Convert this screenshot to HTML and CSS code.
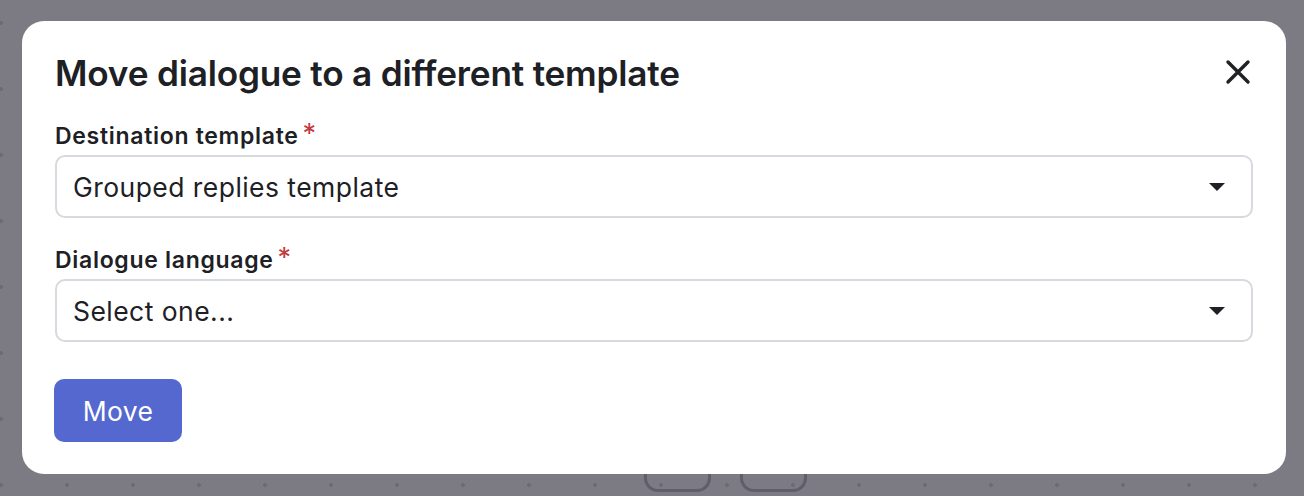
FILE: index.html
```html
<!DOCTYPE html>
<html lang="en">
<head>
<meta charset="utf-8">
<title>Move dialogue</title>
<link rel="stylesheet" href="styles.css">
</head>
<body>
<div class="page">
  <div class="page-actions">
    <span class="ghost-btn"></span>
    <span class="ghost-btn"></span>
  </div>
</div>
<div class="overlay">
  <div class="modal" role="dialog" aria-labelledby="modal-title">
    <div class="modal-header">
      <h1 id="modal-title" class="modal-title">Move dialogue to a different template</h1>
      <button class="close-btn" aria-label="Close">
        <svg width="26" height="26" viewBox="0 0 26 26"><path d="M3 3 L23 23 M23 3 L3 23" stroke="#1f2124" stroke-width="3.4" stroke-linecap="round" fill="none"/></svg>
      </button>
    </div>
    <div class="field">
      <label class="field-label">Destination template<span class="req">*</span></label>
      <div class="select">
        <span class="select-value">Grouped replies template</span>
        <span class="caret"></span>
      </div>
    </div>
    <div class="field">
      <label class="field-label">Dialogue language<span class="req">*</span></label>
      <div class="select">
        <span class="select-value">Select one...</span>
        <span class="caret"></span>
      </div>
    </div>
    <button class="primary-btn">Move</button>
  </div>
</div>
</body>
</html>
```

FILE: styles.css
```css
html, body {
  margin: 0;
  padding: 0;
  height: 100%;
}
body {
  font-family: Inter, "Noto Sans", "Liberation Sans", sans-serif;
  background-color: #7c7b83;
  background-image: radial-gradient(circle at 2px 2px, #6c6b74 1.6px, transparent 2.2px);
  background-size: 66px 66px;
  background-position: -1px 21px;
  overflow: hidden;
  position: relative;
  width: 1304px;
  height: 496px;
}
.page {
  height: 496px;
  display: flex;
  flex-direction: column;
  justify-content: flex-end;
}
.page-actions {
  display: flex;
  gap: 29px;
  padding-left: 644px;
  margin-bottom: 4px;
}
.ghost-btn {
  display: block;
  width: 61px;
  height: 40px;
  border: 3px solid #5f5e6a;
  border-radius: 14px;
}
.overlay {
  position: absolute;
  inset: 0;
}
.modal {
  position: absolute;
  left: 22px;
  top: 21px;
  width: 1264px;
  height: 453px;
  box-sizing: border-box;
  background: #ffffff;
  border-radius: 22px;
  padding: 0 33px;
  color: #1d2024;
}
.modal-header {
  display: flex;
  align-items: center;
  justify-content: space-between;
  height: 102px;
}
.modal-title {
  margin: 0;
  font-size: 35.2px;
  font-weight: 600;
  letter-spacing: -0.2px;
  line-height: 40px;
  padding-top: 2px;
}
.close-btn {
  border: 0;
  background: none;
  padding: 0;
  margin-right: 2px;
  width: 26px;
  height: 26px;
  display: flex;
}
.field {
  display: flex;
  flex-direction: column;
  margin-bottom: 29px;
}
.field-label {
  font-size: 23px;
  font-weight: 600;
  letter-spacing: 0.7px;
  line-height: 28px;
  margin-top: -1px;
  margin-bottom: 5px;
}
.req {
  color: #c4373d;
  font-weight: 400;
  font-size: 27px;
  line-height: 0;
  vertical-align: 1px;
  margin-left: 4px;
}
.select {
  height: 63px;
  box-sizing: border-box;
  border: 2px solid #d6d9dd;
  border-radius: 10px;
  display: flex;
  align-items: center;
  justify-content: space-between;
  padding: 0 26px 0 16px;
}
.select-value {
  font-size: 26.5px;
  letter-spacing: 0.45px;
  font-weight: 400;
}
.caret {
  width: 0;
  height: 0;
  border-left: 8px solid transparent;
  border-right: 8px solid transparent;
  border-top: 8px solid #1d2024;
}
.primary-btn {
  display: block;
  margin-top: 37px;
  width: 128px;
  height: 63px;
  border: 0;
  border-radius: 10px;
  background: #5468cf;
  color: #ffffff;
  font-family: inherit;
  font-size: 26.5px;
  letter-spacing: 0.3px;
  font-weight: 400;
  margin-left: -1px;
}
```
